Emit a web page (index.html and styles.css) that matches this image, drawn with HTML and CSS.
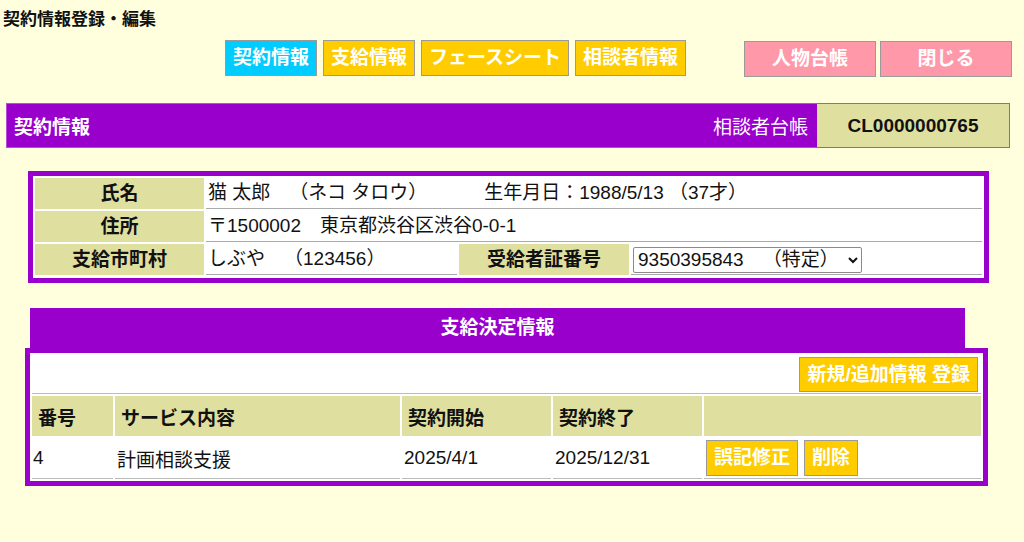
FILE: index.html
```html
<!DOCTYPE html>
<html lang="ja">
<head>
<meta charset="utf-8">
<title>契約情報登録・編集</title>
<link rel="stylesheet" href="styles.css">
</head>
<body>
<div class="page">
  <h1 class="title">契約情報登録・編集</h1>

  <div class="nav">
    <div class="tabs">
      <button class="btn btn-cyan">契約情報</button>
      <button class="btn btn-yellow">支給情報</button>
      <button class="btn btn-yellow">フェースシート</button>
      <button class="btn btn-yellow">相談者情報</button>
    </div>
    <div class="actions">
      <button class="btn btn-pink">人物台帳</button>
      <button class="btn btn-pink">閉じる</button>
    </div>
  </div>

  <div class="bar">
    <span class="bar-title">契約情報</span>
    <span class="bar-label">相談者台帳</span>
    <span class="bar-id">CL0000000765</span>
  </div>

  <div class="info-box">
    <table class="info">
      <colgroup>
        <col class="c-th1"><col class="c-td1"><col class="c-th2"><col>
      </colgroup>
      <tr>
        <th>氏名</th>
        <td colspan="3">猫 太郎　（ネコ タロウ）　　　生年月日：1988/5/13 （37才）</td>
      </tr>
      <tr>
        <th>住所</th>
        <td colspan="3">〒1500002　東京都渋谷区渋谷0-0-1</td>
      </tr>
      <tr>
        <th>支給市町村</th>
        <td>しぶや　（123456）</td>
        <th>受給者証番号</th>
        <td><select class="cert"><option>9350395843　（特定）</option></select></td>
      </tr>
    </table>
  </div>

  <div class="section">
    <div class="section-tab">支給決定情報</div>
    <div class="section-box">
      <table class="list">
        <colgroup>
          <col class="l-no"><col class="l-svc"><col class="l-start"><col class="l-end"><col>
        </colgroup>
        <tr>
          <td class="add-cell" colspan="5"><button class="btn btn-yellow btn-add">新規/追加情報 登録</button></td>
        </tr>
        <tr class="head">
          <th>番号</th>
          <th>サービス内容</th>
          <th>契約開始</th>
          <th>契約終了</th>
          <th></th>
        </tr>
        <tr class="row">
          <td class="no">4</td>
          <td>計画相談支援</td>
          <td>2025/4/1</td>
          <td>2025/12/31</td>
          <td class="ops"><button class="btn btn-yellow btn-sm">誤記修正</button><button class="btn btn-yellow btn-sm">削除</button></td>
        </tr>
      </table>
    </div>
  </div>
</div>
</body>
</html>
```

FILE: styles.css
```css
html, body {
  margin: 0;
  background: #ffffdd;
}

body {
  font-family: "Liberation Sans", "Noto Sans CJK JP", sans-serif;
  color: #111;
  text-spacing-trim: space-all;
}

.page {
  width: 1024px;
}

.title {
  margin: 0;
  padding: 8px 0 0 3px;
  font-size: 17px;
  line-height: 24px;
  font-weight: bold;
  color: #111;
}

/* navigation buttons */
.nav {
  display: flex;
  align-items: flex-start;
  margin-top: 8px;
  padding-left: 225px;
}

.tabs {
  display: flex;
  gap: 6px;
}

.actions {
  display: flex;
  gap: 4px;
  margin-left: 58px;
  margin-top: 1px;
}

.btn {
  box-sizing: border-box;
  height: 36px;
  margin: 0;
  padding: 0 7px;
  border: 1px solid #9a9a9a;
  border-radius: 0;
  font-family: "Liberation Sans", "Noto Sans CJK JP", sans-serif;
  font-size: 19px;
  font-weight: bold;
  line-height: 34px;
  color: #fff;
  cursor: pointer;
  text-spacing-trim: space-all;
}

.btn-cyan { background: #00ccff; }
.btn-yellow { background: #ffcc00; }
.btn-pink {
  width: 132px;
  background: #ff99aa;
}

/* purple header bar */
.bar {
  display: flex;
  box-sizing: border-box;
  height: 45px;
  margin: 26px 14px 0 6px;
  border: 1px solid #b84ad8;
  background: #9900cc;
  color: #fff;
  font-size: 19px;
}

.bar-title {
  flex: 1;
  align-self: center;
  padding-left: 7px;
  font-weight: bold;
}

.bar-label {
  align-self: center;
  padding-right: 9px;
}

.bar-id {
  display: flex;
  align-items: center;
  justify-content: center;
  width: 192px;
  background: #dfdf9f;
  color: #111;
  font-weight: bold;
}

/* person info box */
.info-box {
  margin: 23px 35px 0 28px;
  padding-bottom: 1px;
  border: 5px solid #9900cc;
  background: #fff;
}

.info {
  width: 100%;
  table-layout: fixed;
  border-spacing: 2px;
  font-size: 19px;
}

.c-th1 { width: 169px; }
.c-td1 { width: 251px; }
.c-th2 { width: 170px; }

.info th {
  background: #dfdf9f;
  font-weight: bold;
  text-align: center;
  line-height: 31px;
  padding: 0;
  color: #111;
}

.info td {
  padding: 0 2px;
  line-height: 30px;
  border-bottom: 1px solid #aaa;
  white-space: nowrap;
  vertical-align: middle;
}

.cert {
  box-sizing: border-box;
  width: 229px;
  height: 26px;
  font-family: "Liberation Sans", "Noto Sans CJK JP", sans-serif;
  font-size: 19px;
  color: #111;
  background: #fff;
  border: 1px solid #8a8a8a;
  border-radius: 2px;
  vertical-align: middle;
  text-spacing-trim: space-all;
}

/* decision info section */
.section {
  margin-top: 25px;
}

.section-tab {
  margin-left: 30px;
  width: 935px;
  height: 40px;
  line-height: 40px;
  background: #9900cc;
  color: #fff;
  font-size: 19px;
  font-weight: bold;
  text-align: center;
}

.section-box {
  box-sizing: border-box;
  width: 963px;
  margin-left: 25px;
  border: 5px solid #9900cc;
  background: #fff;
}

.list {
  width: 100%;
  table-layout: fixed;
  border-spacing: 2px;
  font-size: 19px;
}

.l-no { width: 81px; }
.l-svc { width: 285px; }
.l-start { width: 149px; }
.l-end { width: 149px; }

.add-cell {
  padding: 2px 3px 1px 2px;
  text-align: right;
  border-bottom: 1px solid #bbb;
  line-height: 0;
}

.btn-add {
  height: 35px;
  line-height: 33px;
}

.head th {
  height: 40px;
  padding: 0 0 0 6px;
  background: #dfdf9f;
  font-weight: bold;
  text-align: left;
  color: #111;
}

.row td {
  height: 38px;
  padding: 0 2px;
  border-bottom: 1px solid #bbb;
  white-space: nowrap;
}

.row td.no {
  padding-left: 1px;
}

.row td.ops {
  padding: 1px 2px 1px;
  line-height: 0;
}

.btn-sm {
  margin-right: 6px;
}
```
